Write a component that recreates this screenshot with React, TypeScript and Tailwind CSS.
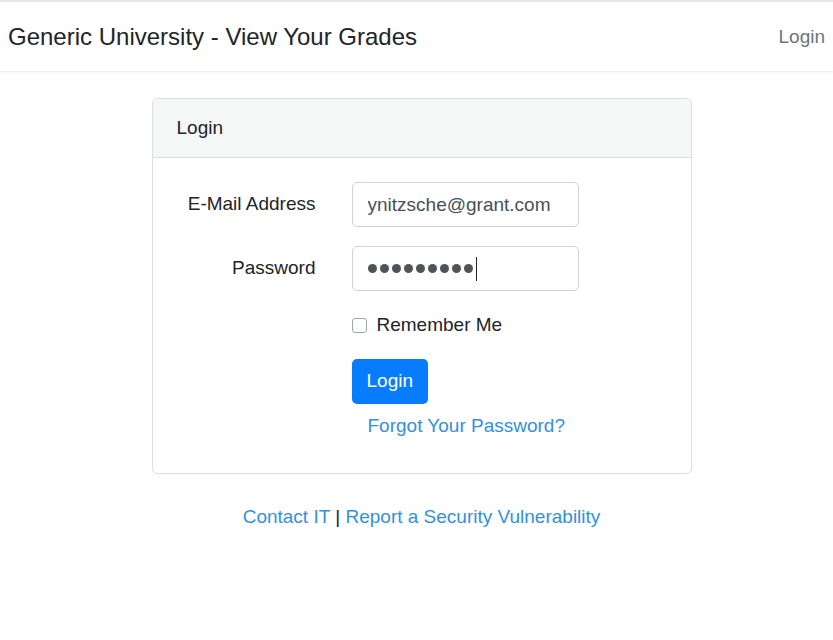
const font = { fontFamily: '"Liberation Sans", Arial, sans-serif' };

const Navbar = () => (
  <nav className="h-[71px] border-t-2 border-[#e4e7e7] bg-white px-2 flex items-center justify-between shadow-[0_1px_2px_rgba(0,0,0,0.09)]">
    <a href="#" className="text-[24px] text-[#212529] leading-none">
      Generic University - View Your Grades
    </a>
    <a href="#" className="text-[19px] text-[#6c757d] leading-none">
      Login
    </a>
  </nav>
);

const LoginCard = () => (
  <div className="w-[540px] border border-[#dcdfe0] rounded-[5px] bg-white">
    <div className="h-[59px] px-6 flex items-center bg-[#f5f7f7] border-b border-[#dcdfe0] rounded-t-[5px] text-[19px] text-[#212529]">
      Login
    </div>
    <form className="px-6 pt-6 pb-[24px] text-[19px] text-[#212529]" onSubmit={e => e.preventDefault()}>
      <div className="flex items-center gap-[36px] mb-[19px]">
        <label className="w-[139px] text-right">E-Mail Address</label>
        <input
          type="email"
          defaultValue="ynitzsche@grant.com"
          className="w-[227px] h-[45px] px-[15px] border border-[#ced4da] rounded-[5px] text-[#495057] text-[19px] outline-none"
        />
      </div>
      <div className="flex items-center gap-[36px] mb-[20px]">
        <label className="w-[139px] text-right">Password</label>
        <div className="w-[227px] h-[45px] px-[15px] border border-[#ced4da] rounded-[5px] flex items-center" aria-label="password">
          <div className="flex gap-[3px]">
            {Array.from({ length: 9 }).map((_, i) => (
              <span key={i} className="w-[9px] h-[9px] rounded-full bg-[#505459]" />
            ))}
          </div>
          <span className="w-px h-[24px] bg-[#212529] ml-[3px]" />
        </div>
      </div>
      <div className="flex items-center h-[29px] mb-[19px] pl-[175px]">
        <input
          type="checkbox"
          className="appearance-none w-[15px] h-[15px] border border-[#9aa6b2] rounded-[3px] bg-white"
        />
        <span className="ml-[10px]">Remember Me</span>
      </div>
      <div className="pl-[175px] flex flex-col items-start">
        <button className="h-[45px] px-[15px] bg-[#077cff] text-white rounded-[5px] text-[19px]">
          Login
        </button>
        <a href="#" className="h-[45px] px-[16px] flex items-center text-[#3490dc]">
          Forgot Your Password?
        </a>
      </div>
    </form>
  </div>
);

export default function App() {
  return (
    <div style={font} className="min-h-[640px] bg-white">
      <Navbar />
      <main className="pl-[10px] pt-[27px] flex flex-col items-center">
        <LoginCard />
        <p className="mt-[28px] text-[19px] leading-[29px] text-[#212529]">
          <a href="#" className="text-[#3490dc]">Contact IT</a> |{' '}
          <a href="#" className="text-[#3490dc]">Report a Security Vulnerability</a>
        </p>
      </main>
    </div>
  );
}
